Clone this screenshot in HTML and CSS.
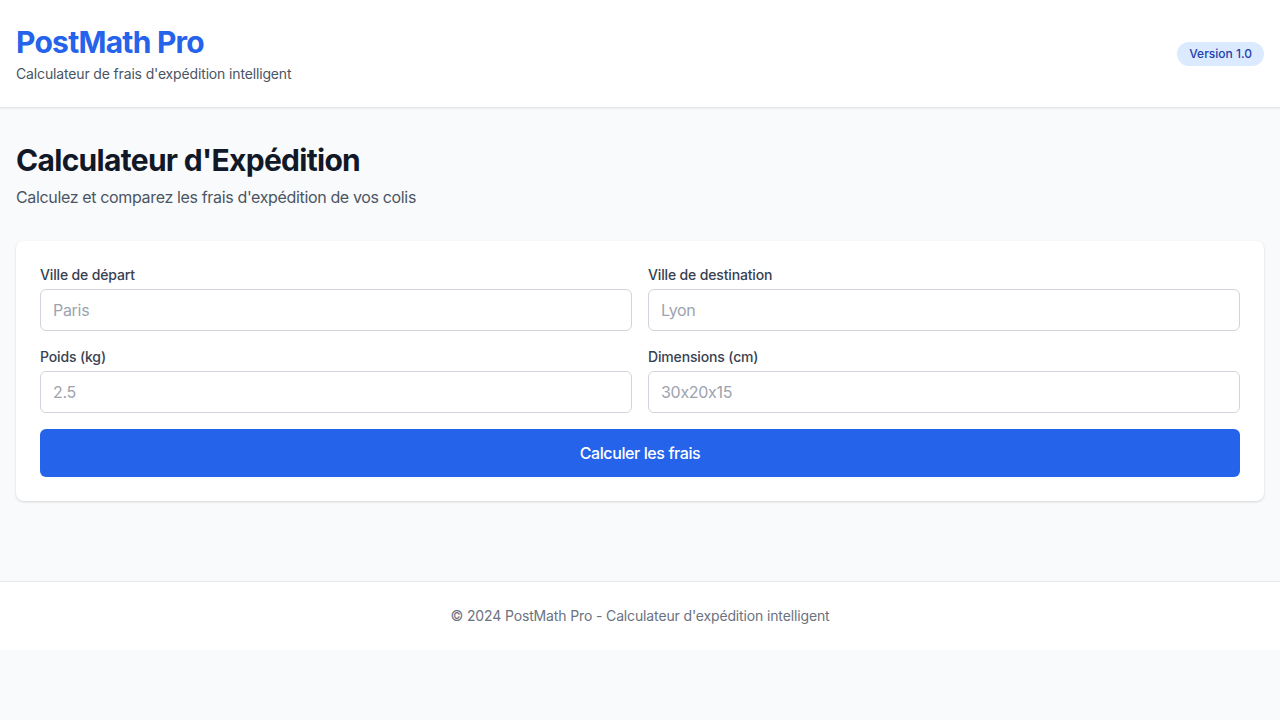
FILE: index.html
```html
<!DOCTYPE html>
<html lang="fr">
<head>
<meta charset="utf-8">
<title>PostMath Pro</title>
<link rel="stylesheet" href="styles.css">
</head>
<body>
<header class="header">
  <div class="brand">
    <h1 class="brand-title">PostMath Pro</h1>
    <p class="brand-sub">Calculateur de frais d'expédition intelligent</p>
  </div>
  <span class="badge">Version 1.0</span>
</header>
<main class="main">
  <h2 class="page-title">Calculateur d'Expédition</h2>
  <p class="page-sub">Calculez et comparez les frais d'expédition de vos colis</p>
  <form class="card">
    <div class="grid">
      <div class="field">
        <label class="label">Ville de départ</label>
        <input class="input" type="text" placeholder="Paris">
      </div>
      <div class="field">
        <label class="label">Ville de destination</label>
        <input class="input" type="text" placeholder="Lyon">
      </div>
      <div class="field">
        <label class="label">Poids (kg)</label>
        <input class="input" type="text" placeholder="2.5">
      </div>
      <div class="field">
        <label class="label">Dimensions (cm)</label>
        <input class="input" type="text" placeholder="30x20x15">
      </div>
    </div>
    <button class="btn" type="button">Calculer les frais</button>
  </form>
</main>
<footer class="footer">
  <p>© 2024 PostMath Pro - Calculateur d'expédition intelligent</p>
</footer>
</body>
</html>
```
FILE: styles.css
```css
* { box-sizing: border-box; }
body {
  margin: 0;
  background: #f9fafb;
  font-family: Inter, "Noto Sans", "Liberation Sans", sans-serif;
  font-feature-settings: "calt" 0;
  color: #111827;
}
input, button { font-feature-settings: "calt" 0; }
.header {
  background: #fff;
  padding: 24px 16px;
  display: flex;
  align-items: center;
  justify-content: space-between;
  box-shadow: 0 1px 2px rgba(0,0,0,0.06);
  border-bottom: 1px solid #e5e7eb;
  height: 108px;
}
.brand-title {
  margin: 0;
  font-size: 30px;
  line-height: 36px;
  font-weight: 700;
  letter-spacing: -0.75px;
  color: #2563eb;
}
.brand-sub {
  margin: 4px 0 0;
  font-size: 14px;
  line-height: 20px;
  letter-spacing: -0.15px;
  color: #4b5563;
}
.badge {
  background: #dbeafe;
  color: #1e40af;
  font-size: 12px;
  line-height: 16px;
  font-weight: 500;
  padding: 4px 12px;
  border-radius: 9999px;
}
.main {
  padding: 34px 16px 32px;
}
.page-title {
  margin: 0;
  font-size: 30px;
  line-height: 36px;
  font-weight: 700;
  letter-spacing: -0.7px;
  color: #111827;
}
.page-sub {
  margin: 7px 0 0;
  font-size: 16px;
  line-height: 24px;
  letter-spacing: -0.35px;
  color: #4b5563;
}
.card {
  margin-top: 32px;
  background: #fff;
  border-radius: 8px;
  padding: 24px;
  box-shadow: 0 1px 3px rgba(0,0,0,0.1), 0 1px 2px rgba(0,0,0,0.06);
}
.grid {
  display: grid;
  grid-template-columns: 1fr 1fr;
  gap: 16px;
}
.field {
  display: flex;
  flex-direction: column;
}
.label {
  font-size: 14px;
  line-height: 20px;
  font-weight: 500;
  letter-spacing: -0.15px;
  color: #374151;
  margin-bottom: 4px;
}
.input {
  height: 42px;
  border: 1px solid #d1d5db;
  border-radius: 6px;
  padding: 8px 12px;
  font-family: inherit;
  font-size: 16px;
  line-height: 24px;
  letter-spacing: -0.3px;
  color: #111827;
  background: #fff;
}
.input::placeholder { color: #9ca3af; }
.btn {
  margin-top: 16px;
  width: 100%;
  height: 48px;
  border: 0;
  border-radius: 6px;
  background: #2563eb;
  color: #fff;
  font-family: inherit;
  font-size: 16px;
  font-weight: 500;
  letter-spacing: -0.4px;
}
.footer {
  margin-top: 48px;
  background: #fff;
  border-top: 1px solid #e5e7eb;
  padding: 24px 16px;
  text-align: center;
}
.footer p {
  margin: 0;
  font-size: 14px;
  line-height: 20px;
  letter-spacing: -0.14px;
  color: #6b7280;
}
```
